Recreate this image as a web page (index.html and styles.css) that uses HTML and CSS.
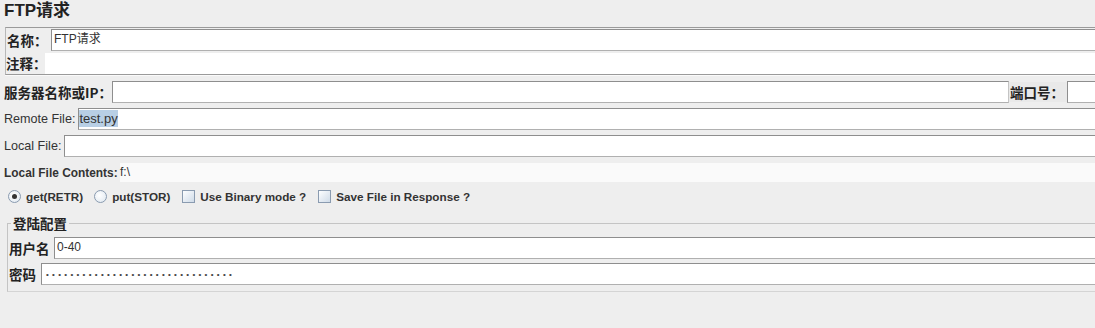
FILE: index.html
```html
<!DOCTYPE html>
<html lang="zh">
<head>
  <meta charset="UTF-8" />
  <title>FTP请求</title>
  <link rel="stylesheet" href="styles.css">
</head>
<body>
<div class="page">

  <h1 class="title">FTP请求</h1>

  <!-- 名称 / 注释 -->
  <div class="name-panel">
    <div class="row name-row">
      <span class="lbl cn">名称：</span>
      <div class="field">FTP请求</div>
    </div>
    <div class="row comment-row">
      <span class="lbl cn">注释：</span>
      <div class="comment"></div>
    </div>
  </div>

  <!-- 服务器 -->
  <div class="row server-row">
    <span class="lbl cn">服务器名称或IP：</span>
    <div class="field server-field"></div>
    <span class="lbl cn port-lbl">端口号：</span>
    <div class="field port-field"></div>
  </div>

  <div class="row file-row">
    <span class="lbl">Remote File:</span>
    <div class="field remote-field"><span class="selected">test.py</span></div>
  </div>

  <div class="row file-row">
    <span class="lbl">Local File:</span>
    <div class="field local-field"></div>
  </div>

  <div class="row contents-row">
    <span class="lbl bold">Local File Contents:</span>
    <div class="contents">f:\</div>
  </div>

  <!-- 选项 -->
  <div class="row options-row">
    <label class="opt"><span class="radio checked"></span>get(RETR)</label>
    <label class="opt"><span class="radio"></span>put(STOR)</label>
    <label class="opt"><span class="check"></span>Use Binary mode ?</label>
    <label class="opt"><span class="check"></span>Save File in Response ?</label>
  </div>

  <!-- 登陆配置 -->
  <fieldset class="login-box">
    <legend class="cn">登陆配置</legend>
    <div class="row login-row">
      <span class="lbl cn user-lbl">用户名</span>
      <div class="field">0-40</div>
    </div>
    <div class="row login-row">
      <span class="lbl cn pass-lbl">密码</span>
      <div class="field pass-field"><span class="dots">•••••••••••••••••••••••••••••••</span></div>
    </div>
  </fieldset>

</div>
</body>
</html>
```

FILE: styles.css
```css
html, body {
  margin: 0;
  overflow: hidden;
  background: #eeeeee;
}

body {
  font-family: 'Liberation Sans', Arial, 'Noto Sans CJK SC', sans-serif;
  font-size: 12px;
  color: #333;
}

.page {
  width: 1130px;
}

.cn {
  font-family: 'Noto Sans CJK SC', 'Liberation Sans', sans-serif;
  font-weight: bold;
  font-size: 13.5px;
  color: #222;
}

.title {
  margin: 0;
  height: 27px;
  padding-left: 4px;
  line-height: 22px;
  font-size: 17px;
  font-weight: bold;
  color: #222;
  font-family: 'Liberation Sans', Arial, 'Noto Sans CJK SC', sans-serif;
}

.row {
  display: flex;
  align-items: center;
}

.lbl {
  box-sizing: border-box;
  flex: none;
  white-space: nowrap;
  overflow: hidden;
}

.bold { font-weight: bold; color: #333; }

.field {
  flex: 1;
  height: 22px;
  box-sizing: border-box;
  background: #fff;
  border: 1px solid #8e8e8e;
  border-right-color: #c4c4c4;
  border-bottom-color: #b0b0b0;
  padding-left: 2px;
  line-height: 19px;
  color: #333;
  white-space: nowrap;
}

/* 名称 / 注释 */
.name-panel {
  margin-left: 5px;
  border-top: 1px solid #9a9a9a;
  border-left: 1px solid #b8b8b8;
  border-bottom: 1px solid #9a9a9a;
  box-shadow: 0 1px 0 #fafafa;
}

.name-row {
  height: 24px;
  padding-left: 1px;
}

.name-row .lbl { width: 44px; }

.comment-row {
  height: 22px;
}

.comment-row .lbl { width: 39px; }

.comment {
  flex: 1;
  height: 21px;
  margin-top: 1px;
  background: #fff;
}

/* 服务器 / 文件 */
.server-row {
  margin-top: 6px;
  padding-left: 4px;
}

.server-row .lbl { width: 108px; }

.server-field {
  flex: 0 0 897px;
}

.server-row .port-lbl {
  width: 58px;
  padding-left: 1px;
  background: #e9e9e9;
}

.port-field {
  flex: 0 0 70px;
}

.file-row {
  margin-top: 5px;
  padding-left: 4px;
}

.file-row .lbl { font-size: 12.6px; }

.remote-field {
  margin-left: 3px;
  padding-left: 0;
}

.local-field { margin-left: 3px; }

.selected {
  background: #b8cfe5;
  color: #333;
  font-size: 13px;
  padding: 1px 0;
}

.contents-row {
  margin-top: 6px;
  padding-left: 4px;
  height: 19px;
}

.contents-row .lbl {
  width: 116px;
  font-size: 11.9px;
}

.contents {
  flex: 1;
  height: 19px;
  line-height: 19px;
  background: #fafafa;
}

/* 选项 */
.options-row {
  margin-top: 5px;
  height: 18px;
  padding-left: 8px;
  gap: 11px;
  font-weight: bold;
  font-size: 11.7px;
  color: #333;
}

.opt {
  display: flex;
  align-items: center;
  gap: 5px;
}

.radio {
  width: 11px;
  height: 11px;
  border-radius: 50%;
  border: 1px solid #8a9bb0;
  background: radial-gradient(circle at 40% 40%, #fff, #dde6ef);
  display: inline-flex;
  align-items: center;
  justify-content: center;
}

.radio.checked::after {
  content: "";
  width: 5px;
  height: 5px;
  border-radius: 50%;
  background: #333;
}

.check {
  width: 11px;
  height: 11px;
  border: 1px solid #8a9bb0;
  background: linear-gradient(135deg, #fdfeff, #cfdbe8);
  margin-left: 1px;
}

/* 登陆配置 */
.login-box {
  margin: 10px 0 0 7px;
  padding: 6px 0 6px 1px;
  min-width: 0;
  border: 1px solid #c4c4c4;
  border-bottom-color: #d4d4d4;
}

.login-box legend {
  padding: 0 2px;
  margin-left: 2px;
  line-height: 16px;
}

.login-row {
  height: 22px;
}

.login-row + .login-row {
  margin-top: 4px;
}

.user-lbl { width: 45px; }
.pass-lbl { width: 32px; }

.pass-field {
  line-height: 18px;
  padding-left: 4px;
}

.dots {
  font-size: 8px;
  letter-spacing: 3.3px;
  color: #444;
}
```
